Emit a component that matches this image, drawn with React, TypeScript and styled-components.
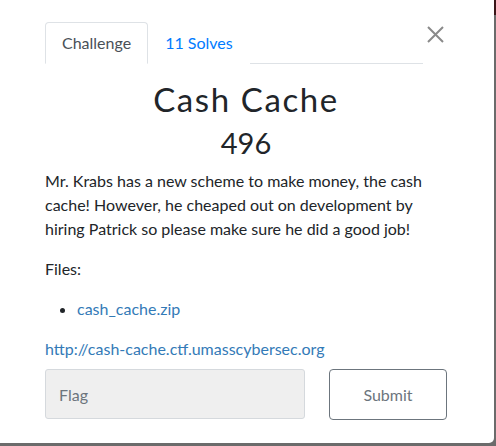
import React from "react";
import styled, { createGlobalStyle } from "styled-components";

const Global = createGlobalStyle`
  html, body {
    margin: 0;
    padding: 0;
    width: 496px;
    height: 446px;
    overflow: hidden;
    background: linear-gradient(to bottom, #3a1618 0px, #3a1618 15px, #6b6b6b 15px);
    font-family: Lato, "Liberation Sans", sans-serif;
  }
  * { box-sizing: border-box; }
`;

const Modal = styled.div`
  width: 494px;
  height: 443px;
  background: #fff;
  border-radius: 0 0 5px 0;
  padding: 22px 47px 0 45px;
  color: #212529;
  font-size: 16px;
  line-height: 24px;
`;

const HeaderRow = styled.div`
  display: flex;
  align-items: flex-start;
`;

const Tabs = styled.nav`
  display: flex;
  width: 378px;
  border-bottom: 1px solid #dee2e6;
`;

const Tab = styled.a<{ $active?: boolean }>`
  display: block;
  padding: 8px 16px;
  margin-bottom: -1px;
  border: 1px solid ${(p) => (p.$active ? "#dee2e6" : "transparent")};
  border-bottom-color: ${(p) => (p.$active ? "#fff" : "transparent")};
  border-radius: 4px 4px 0 0;
  background: #fff;
  color: ${(p) => (p.$active ? "#495057" : "#007bff")};
  text-decoration: none;
`;

const Close = styled.button`
  margin-left: auto;
  margin-top: 3px;
  width: 24px;
  height: 18px;
  padding: 0;
  border: 0;
  background: none;
  display: flex;
  align-items: center;
  justify-content: center;
`;

const Title = styled.h2`
  margin: 16px 0 0;
  text-align: center;
  font-size: 33px;
  line-height: 1.2;
  font-weight: 400;
  letter-spacing: 1.6px;
`;

const Value = styled.h3`
  margin: 6px 0 0;
  text-align: center;
  font-size: 29px;
  line-height: 1.2;
  font-weight: 400;
`;

const Para = styled.p<{ $top?: number }>`
  margin: ${(p) => p.$top ?? 0}px 0 0;
`;

const FileList = styled.ul`
  margin: 16px 0 0;
  padding-left: 32px;
`;

const Link = styled.a`
  color: #337ab7;
  text-decoration: none;
`;

const SubmitRow = styled.div`
  display: grid;
  grid-template-columns: 260px 118px;
  column-gap: 24px;
  margin-top: 8px;
`;

const FlagInput = styled.input`
  height: 50px;
  padding: 0 13px;
  background: #efefef;
  border: 1px solid #d5d9dd;
  border-radius: 3px;
  font-family: Lato, "Liberation Sans", sans-serif;
  font-size: 16px;
  color: #495057;
  &::placeholder { color: #6c757d; }
`;

const SubmitButton = styled.button`
  height: 51px;
  background: #fff;
  border: 1px solid #6c757d;
  border-radius: 4px;
  color: #6c757d;
  font-family: Lato, "Liberation Sans", sans-serif;
  font-size: 16px;
`;

export default function App() {
  return (
    <>
      <Global />
      <Modal>
        <HeaderRow>
          <Tabs>
            <Tab $active>Challenge</Tab>
            <Tab>11 Solves</Tab>
          </Tabs>
          <Close aria-label="Close">
            <svg width="17" height="17" viewBox="0 0 17 17">
              <path d="M1 1L16 16M16 1L1 16" stroke="#8a8a8a" strokeWidth="2" />
            </svg>
          </Close>
        </HeaderRow>
        <Title>Cash Cache</Title>
        <Value>496</Value>
        <Para $top={9}>
          Mr. Krabs has a new scheme to make money, the cash cache! However, he cheaped out on
          development by hiring Patrick so please make sure he did a good job!
        </Para>
        <Para $top={16}>Files:</Para>
        <FileList>
          <li>
            <Link>cash_cache.zip</Link>
          </li>
        </FileList>
        <Para $top={16}>
          <Link>http://cash-cache.ctf.umasscybersec.org</Link>
        </Para>
        <SubmitRow>
          <FlagInput placeholder="Flag" />
          <SubmitButton>Submit</SubmitButton>
        </SubmitRow>
      </Modal>
    </>
  );
}
